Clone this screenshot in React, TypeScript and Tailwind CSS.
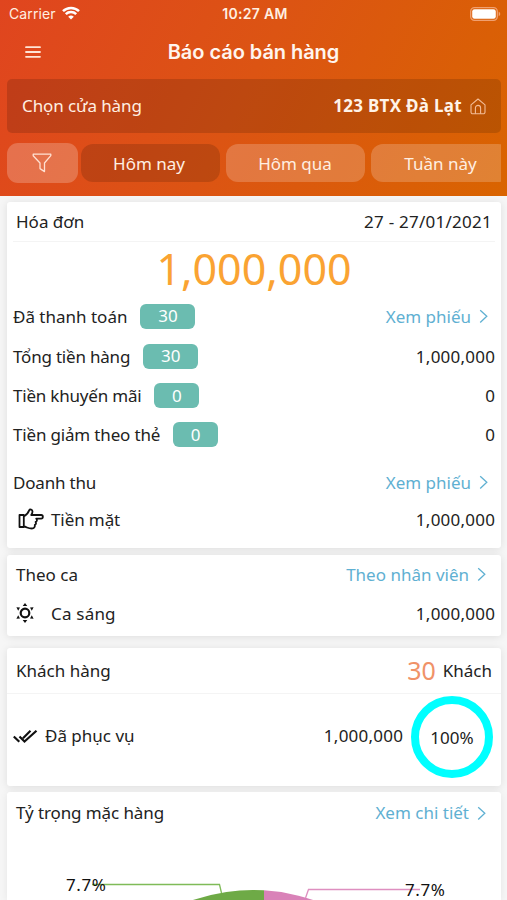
import type { ReactNode } from 'react';
import clsx from 'clsx';

interface RowProps {
  label: string;
  tracking?: string;
  count?: string;
  value: ReactNode;
  className: string;
}

function Chevron() {
  return (
    <svg width="10" height="16" viewBox="0 0 10 16" fill="none" stroke="currentColor" strokeWidth="1.3" className="shrink-0">
      <path d="M1.200 2.200 7.800 8.300l-6.600 6.100" />
    </svg>
  );
}

function More({ text, className }: { text: string; className?: string }) {
  return (
    <span className={clsx('flex items-center gap-[8px] text-[#5fb0d2]', className)}>
      <span>{text}</span>
      <Chevron />
    </span>
  );
}

function Row({ label, tracking, count, value, className }: RowProps) {
  return (
    <div className={clsx('flex items-center justify-between pl-[6px] pr-[6px]', className)}>
      <div className="flex items-center gap-[13px]">
        <span className={tracking}>{label}</span>
        {count && (
          <span
            className={clsx(
              'flex h-[25px] items-center justify-center rounded-[6px] bg-[#6bbcb0] pb-px text-white',
              count.length > 1 ? 'w-[55px]' : 'w-[45px]',
            )}
          >
            {count}
          </span>
        )}
      </div>
      {value}
    </div>
  );
}

function Amount() {
  return <span className="-mr-[0.3px] tracking-[0.25px]">1,000,000</span>;
}

function StatusBar() {
  return (
    <div className="grid h-[28px] grid-cols-3 items-center pl-[9px] pr-[6px] font-[Inter,sans-serif] text-[14px]">
      <div className="flex items-center gap-[6px]">
        <span className="tracking-[0.1px]">Carrier</span>
        <svg width="18" height="14" viewBox="0 0 18 14" fill="none" stroke="white" strokeWidth="2.500" className="-mt-[2px]">
          <path d="M1 5.200a11.400 11.400 0 0 1 16 0M3.800 8.200a7.400 7.400 0 0 1 10.400 0" />
          <path d="M9 13.600 6.200 10.800a4 4 0 0 1 5.600 0Z" fill="white" stroke="none" />
        </svg>
      </div>
      <span className="text-center font-semibold tracking-[0.3px]">10:27 AM</span>
      <svg width="31" height="14" viewBox="0 0 31 14" className="-mt-px justify-self-end">
        <rect x="0.700" y="0.700" width="26.600" height="12.600" rx="3.800" fill="none" stroke="#f0a070" strokeWidth="1.300" />
        <rect x="2.200" y="2.200" width="23.600" height="9.600" rx="2.300" fill="white" />
        <path d="M28.700 4.800c2 .7 2 3.700 0 4.400z" fill="#f0a070" />
      </svg>
    </div>
  );
}

function Header() {
  return (
    <header className="h-[196px] bg-linear-[117deg,#e0451f_0%,#dc5413_48%,#d96400_100%] text-[#ffefe2]">
      <StatusBar />
      <div className="grid h-[51px] grid-cols-[80px_1fr_80px] items-center pb-[3px]">
        <svg width="16" height="12" viewBox="0 0 16 12" stroke="#ffe5d6" strokeWidth="1.800" strokeLinecap="round" className="ml-[25px]">
          <path d="M1 1.200h14M1 6h14M1 10.800h14" />
        </svg>
        <h1 className="text-center font-[Inter,sans-serif] text-[20px] font-semibold tracking-[-0.050px] text-[#fff5ee]">
          Báo cáo bán hàng
        </h1>
      </div>
      <div className="mx-[7px] flex h-[54px] w-[494px] items-center justify-between rounded-[5px] bg-black/14 px-[15px]">
        <span className="pb-px tracking-[-0.1px]">Chọn cửa hàng</span>
        <span className="flex items-center gap-[8px] font-bold text-[#fff3e8]">
          <span className="pb-px tracking-[0.3px]">123 BTX Đà Lạt</span>
          <svg width="16" height="17" viewBox="0 0 16 17" fill="none" stroke="#f3bd98" strokeWidth="1.100" strokeLinejoin="round">
            <path d="M1 6.800 8 1l7 5.800V14a1.800 1.800 0 0 1-1.800 1.800H2.800A1.800 1.800 0 0 1 1 14Z" />
            <path d="M5.400 15.800V10a2.600 2.600 0 0 1 5.200 0v5.800" />
          </svg>
        </span>
      </div>
      <div className="mx-[7px] mt-[10px] flex h-[40px] w-[494px] overflow-hidden">
        <div className="mr-[3px] flex w-[71px] shrink-0 items-center justify-center rounded-[11px] bg-white/22 pr-px">
          <svg width="20" height="20" viewBox="0 0 20 20" fill="none" stroke="#ffe1d2" strokeWidth="1.300" strokeLinejoin="round">
            <path d="M1.200 1.200h17.600v1.500l-6.300 7.300v8.600L8 15.600V10L1.200 2.700Z" />
          </svg>
        </div>
        <div className="mt-px mr-[6px] flex h-[38px] w-[139px] shrink-0 items-center justify-center rounded-[12px] bg-black/14 pr-[3px]">
          Hôm nay
        </div>
        <div className="mt-px mr-[6px] flex h-[38px] w-[139px] shrink-0 items-center justify-center rounded-[12px] bg-white/20 pr-px">
          Hôm qua
        </div>
        <div className="mt-px flex h-[38px] w-[139px] shrink-0 items-center justify-center rounded-[12px] bg-white/20">
          Tuần này
        </div>
      </div>
    </header>
  );
}

function InvoiceCard() {
  return (
    <section className="h-[346px] rounded-[3px] bg-white shadow-[0_1px_8px_rgba(0,0,0,0.1)]">
      <div className="mx-[6px] flex h-[40px] items-center justify-between border-b border-[#f4f4f4] pl-[3px] pr-[3px]">
        <span>Hóa đơn</span>
        <span className="tracking-[0.25px]">27 - 27/01/2021</span>
      </div>
      <div className="flex h-[54px] items-center justify-center pb-[2px] text-[43px] text-[#faa332]">1,000,000</div>
      <Row className="h-[40px]" label="Đã thanh toán" count="30" value={<More text="Xem phiếu" className="mr-[6px]" />} />
      <Row className="h-[40px]" label="Tổng tiền hàng" tracking="tracking-[-0.2px]" count="30" value={<Amount />} />
      <Row className="h-[39px]" label="Tiền khuyến mãi" tracking="tracking-[-0.2px]" count="0" value={<span>0</span>} />
      <Row className="h-[39px]" label="Tiền giảm theo thẻ" tracking="tracking-[-0.170px]" count="0" value={<span>0</span>} />
      <Row className="mt-[8px] h-[40px]" label="Doanh thu" tracking="tracking-[-0.2px]" value={<More text="Xem phiếu" className="mr-[6px]" />} />
      <div className="flex h-[34px] items-center justify-between pl-[11px] pr-[6px]">
        <div className="flex items-center gap-[7px]">
          <svg width="26" height="22" viewBox="0 0 26 22" fill="none" stroke="#111" strokeWidth="1.800" strokeLinejoin="round" strokeLinecap="round">
            <path d="M1.500 7h4.300v12H1.500ZM5.800 8.500c3-1.500 4.200-3 5.500-6.300.5-1.200 3.200-.8 3.200 1.300 0 1.500-.7 2.600-1.300 3.500h10c2.200 0 2.200 3.700 0 3.700h-5c1.300 1.200.8 2.800-.6 3.200.9 1.300.3 2.600-.8 3 .4 2-.7 3.600-3 3.600-4 0-4.800-1.500-8-2" />
          </svg>
          <span className="tracking-[-0.1px]">Tiền mặt</span>
        </div>
        <Amount />
      </div>
    </section>
  );
}

function ShiftCard() {
  return (
    <section className="mt-[7px] h-[81px] rounded-[3px] bg-white shadow-[0_1px_8px_rgba(0,0,0,0.1)]">
      <div className="flex h-[38px] items-center justify-between pl-[9px] pr-[14px]">
        <span>Theo ca</span>
        <More text="Theo nhân viên" />
      </div>
      <div className="flex h-[40px] items-center justify-between pl-[9px] pr-[6px]">
        <div className="flex items-center gap-[17px]">
          <svg width="18" height="20" viewBox="0 0 18 20" fill="#111">
            <circle cx="9" cy="10" r="4.300" fill="none" stroke="#111" strokeWidth="2.200" />
            <path d="m9 0 2.300 3H6.700ZM9 20l-2.300-3h4.600ZM.4 4.200l3.600.3-1.800 3.200ZM17.600 4.200l-3.600.3 1.800 3.200ZM.4 15.800l3.600-.3-1.800-3.200ZM17.600 15.800l-3.600-.3 1.800-3.200Z" />
          </svg>
          <span className="tracking-[0.2px]">Ca sáng</span>
        </div>
        <Amount />
      </div>
    </section>
  );
}

function CustomerCard() {
  return (
    <section className="mt-[12px] h-[138px] rounded-[3px] bg-white shadow-[0_1px_8px_rgba(0,0,0,0.1)]">
      <div className="flex h-[46px] items-center justify-between border-b border-[#f4f4f4] pl-[9px] pr-[9px]">
        <span>Khách hàng</span>
        <span className="flex items-center gap-[7px]">
          <span className="text-[25px] text-[#f09268]">30</span>
          <span>Khách</span>
        </span>
      </div>
      <div className="flex h-[86px] items-center pl-[6px] pr-[8px]">
        <svg width="25" height="14" viewBox="0 0 25 14" fill="none" stroke="#111" strokeWidth="2.200">
          <path d="m.8 6.500 5.500 5.300M6.500 6.500l5 5L23.500.8M10 8.200 17.500.8" />
        </svg>
        <span className="ml-[7px] pb-[4px]">Đã phục vụ</span>
        <span className="mr-[8px] ml-auto pb-[4px]">
          <Amount />
        </span>
        <div className="flex size-[82px] items-center justify-center rounded-full border-8 border-[#00ffff] tracking-[0.1px]">
          100%
        </div>
      </div>
    </section>
  );
}

function ShareCard() {
  return (
    <section className="mt-[6px] h-[108px] rounded-t-[3px] bg-white shadow-[0_1px_8px_rgba(0,0,0,0.07)]">
      <div className="flex h-[42px] items-center justify-between pb-px pl-[9px] pr-[14px]">
        <span className="tracking-[-0.1px]">Tỷ trọng mặc hàng</span>
        <More text="Xem chi tiết" />
      </div>
      {/* top of the pie, the rest is below the fold */}
      <svg width="494" height="66" viewBox="7 834 494 66" className="block">
        <path d="M264 1075V890.300A185 185 0 0 0 68 1075Z" fill="#6eaa46" />
        <path d="M264 1075V890.300A185 185 0 0 1 438 1075Z" fill="#d982b8" />
        <path d="M92 884.500H219.500L221.500 893" fill="none" stroke="#7fbb58" strokeWidth="1.300" />
        <path d="M420 889.500H308.500L305.500 898" fill="none" stroke="#de8fc0" strokeWidth="1.300" />
        <g fill="#111" fontSize="17" fontFamily="Noto Sans, sans-serif">
          <text x="66" y="891" textLength="40">7.7%</text>
          <text x="405" y="896" textLength="40">7.7%</text>
        </g>
      </svg>
    </section>
  );
}

export default function App() {
  return (
    <div className="h-[900px] w-[507px] overflow-hidden bg-[#f6f6f6] font-['Noto_Sans',sans-serif] text-[17px] leading-none whitespace-nowrap text-[#222]">
      <Header />
      <main className="mx-[7px] w-[494px] pt-[6px]">
        <InvoiceCard />
        <ShiftCard />
        <CustomerCard />
        <ShareCard />
      </main>
    </div>
  );
}
